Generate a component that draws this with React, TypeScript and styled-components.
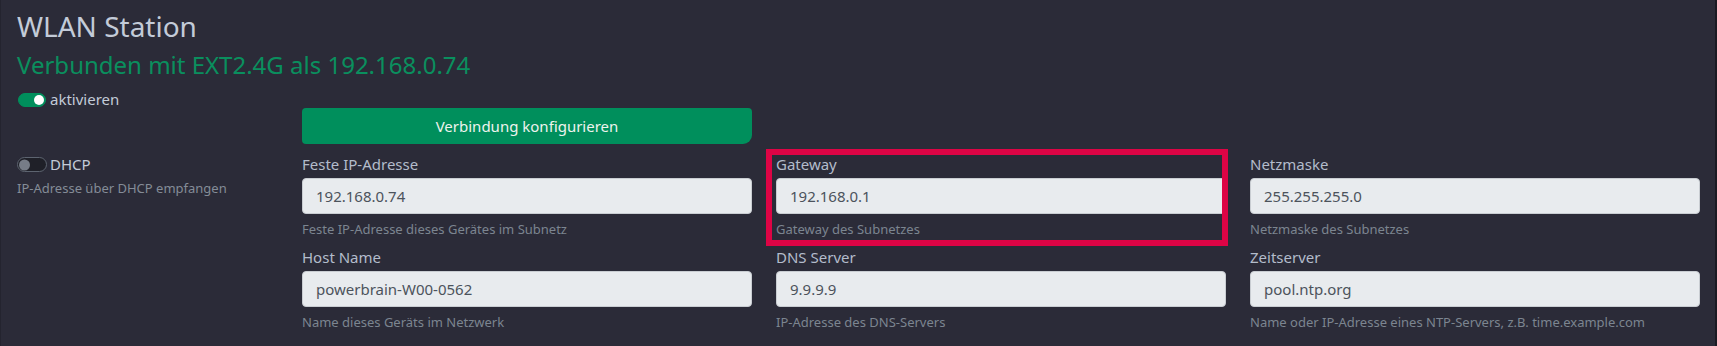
import React from "react";
import styled, { createGlobalStyle } from "styled-components";

const Global = createGlobalStyle`
  html, body { margin: 0; padding: 0; background: #2b2b38; }
  body { font-family: "Noto Sans", "Open Sans", sans-serif; }
  * { box-sizing: border-box; }
`;

const Page = styled.div`
  width: 1717px;
  height: 346px;
  background: #2b2b38;
  border-left: 1px solid #24242f;
  border-right: 1px solid #1a1a22;
  box-shadow: inset -1px 0 0 #1a1a22;
  padding: 8px 0 0 16px;
  position: relative;
  overflow: hidden;
`;

const Title = styled.h2`
  margin: 0;
  font-size: 28px;
  line-height: 36px;
  font-weight: 400;
  color: #c3cbd8;
`;

const Status = styled.h4`
  margin: 6px 0 0;
  font-size: 24px;
  line-height: 29px;
  font-weight: 400;
  color: #0a8f5e;
`;

const SwitchRow = styled.label<{ $top?: number; $gap?: number }>`
  display: flex;
  align-items: center;
  gap: ${(p) => p.$gap ?? 4}px;
  margin-top: ${(p) => p.$top ?? 0}px;
  height: 17px;
  font-size: 15px;
  line-height: 17px;
  color: #c3cbd8;
`;

const Toggle = styled.span<{ $on: boolean; $w: number; $h: number }>`
  position: relative;
  width: ${(p) => p.$w}px;
  height: ${(p) => p.$h}px;
  border-radius: ${(p) => p.$h}px;
  flex: none;
  margin-left: ${(p) => (p.$on ? 1 : 0)}px;
  background: ${(p) => (p.$on ? "#008f5c" : "#1f2028")};
  border: 1px solid ${(p) => (p.$on ? "#008f5c" : "#5d6470")};
  &::after {
    content: "";
    position: absolute;
    top: 50%;
    transform: translateY(-50%);
    width: ${(p) => p.$h - 4}px;
    height: ${(p) => p.$h - 4}px;
    border-radius: 50%;
    background: ${(p) => (p.$on ? "#ffffff" : "#767c87")};
    ${(p) => (p.$on ? "right: 1px;" : "left: 1px;")}
  }
`;

const Grid = styled.div`
  display: grid;
  grid-template-columns: 261px 450px 450px 450px;
  column-gap: 24px;
`;

const Button = styled.button`
  grid-column: 2;
  grid-row: 1;
  height: 36px;
  border: none;
  border-radius: 4px 4px 9px 4px;
  background: #008f5c;
  color: #eef3ee;
  font-family: inherit;
  font-size: 15px;
  margin-bottom: 10px;
`;

const SideCol = styled.div`
  grid-column: 1;
  grid-row: 2;
  padding-top: 2px;
`;

const Fields = styled.div`
  grid-column: 2 / span 3;
  grid-row: 2;
  display: grid;
  grid-template-columns: repeat(3, 450px);
  column-gap: 24px;
`;

const SideHelp = styled.div`
  margin-top: 6px;
  font-size: 13px;
  line-height: 18px;
  color: #848c97;
`;

const Field = styled.div`
  display: flex;
  flex-direction: column;
  padding-bottom: 9px;
`;

const Label = styled.div`
  font-size: 15px;
  line-height: 21px;
  color: #b3bccb;
  margin-bottom: 3px;
`;

const Input = styled.div`
  height: 36px;
  border-radius: 4px;
  background: #e8ebee;
  border: 1px solid #c9cdd2;
  color: #4c535c;
  font-size: 15px;
  display: flex;
  align-items: center;
  padding: 0 13px;
`;

const Help = styled.div`
  margin-top: 6px;
  font-size: 13px;
  line-height: 18px;
  color: #7c8590;
`;

const Highlight = styled.div`
  position: absolute;
  left: 765px;
  top: 149px;
  width: 462px;
  height: 97px;
  border: 6px solid #dd0445;
  pointer-events: none;
`;

const fields = [
  ["Feste IP-Adresse", "192.168.0.74", "Feste IP-Adresse dieses Gerätes im Subnetz"],
  ["Gateway", "192.168.0.1", "Gateway des Subnetzes"],
  ["Netzmaske", "255.255.255.0", "Netzmaske des Subnetzes"],
  ["Host Name", "powerbrain-W00-0562", "Name dieses Geräts im Netzwerk"],
  ["DNS Server", "9.9.9.9", "IP-Adresse des DNS-Servers"],
  ["Zeitserver", "pool.ntp.org", "Name oder IP-Adresse eines NTP-Servers, z.B. time.example.com"],
];

export default function App() {
  return (
    <>
      <Global />
      <Page>
        <Title>WLAN Station</Title>
        <Status>Verbunden mit EXT2.4G als 192.168.0.74</Status>
        <SwitchRow $top={12}>
          <Toggle $on $w={28} $h={14} />
          aktivieren
        </SwitchRow>
        <Grid>
          <Button>Verbindung konfigurieren</Button>
          <SideCol>
            <SwitchRow $gap={3}>
              <Toggle $on={false} $w={30} $h={15} />
              DHCP
            </SwitchRow>
            <SideHelp>IP-Adresse über DHCP empfangen</SideHelp>
          </SideCol>
          <Fields>
            {fields.map(([l, v, h]) => (
              <Field key={l}>
                <Label>{l}</Label>
                <Input>{v}</Input>
                <Help>{h}</Help>
              </Field>
            ))}
          </Fields>
        </Grid>
        <Highlight />
      </Page>
    </>
  );
}
